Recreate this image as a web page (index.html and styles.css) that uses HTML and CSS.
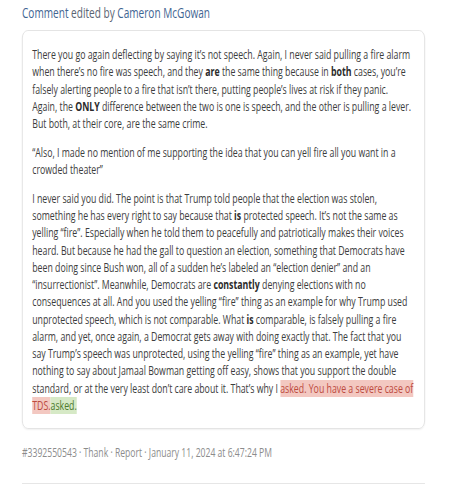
FILE: index.html
```html
<!DOCTYPE html>
<html lang="en">
<head>
<meta charset="utf-8">
<title>Comment</title>
<link rel="stylesheet" href="styles.css">
</head>
<body>
<div class="page">
  <div class="sheet">
    <div class="edit-head"><span class="label">Comment</span> edited by <span class="author">Cameron McGowan</span></div>
    <div class="comment-box">
      <p>There you go again deflecting by saying it’s not speech. Again, I never said pulling a fire alarm when there’s no fire was speech, and they <b>are</b> the same thing because in <b>both</b> cases, you’re falsely alerting people to a fire that isn’t there, putting people’s lives at risk if they panic. Again, the <b>ONLY</b> difference between the two is one is speech, and the other is pulling a lever. But both, at their core, are the same crime.</p>
      <p>“Also, I made no mention of me supporting the idea that you can yell fire all you want in a crowded theater”</p>
      <p>I never said you did. The point is that Trump told people that the election was stolen, something he has every right to say because that <b>is</b> protected speech. It’s not the same as yelling “fire”. Especially when he told them to peacefully and patriotically makes their voices heard. But because he had the gall to question an election, something that Democrats have been doing since Bush won, all of a sudden he’s labeled an “election denier” and an “insurrectionist”. Meanwhile, Democrats are <b>constantly</b> denying elections with no consequences at all. And you used the yelling “fire” thing as an example for why Trump used unprotected speech, which is not comparable. What <b>is</b> comparable, is falsely pulling a fire alarm, and yet, once again, a Democrat gets away with doing exactly that. The fact that you say Trump’s speech was unprotected, using the yelling “fire” thing as an example, yet have nothing to say about Jamaal Bowman getting off easy, shows that you support the double standard, or at the very least don’t care about it. That’s why I <del class="removed">asked. You have a severe case of TDS.</del><ins class="added">asked.</ins></p>
    </div>
    <div class="meta">#3392550543 · Thank · Report · January 11, 2024 at 6:47:24 PM</div>
    <div class="rule"></div>
  </div>
</div>
</body>
</html>
```

FILE: styles.css
```css
html, body {
  margin: 0;
  padding: 0;
  background: #ffffff;
  overflow: hidden;
}

.page {
  padding: 4px 0 0 22px;
  width: 431px;
  overflow: hidden;
}

/* the source screenshot is horizontally compressed; reproduce that */
.sheet {
  width: 552px;
  transform: scaleX(0.73);
  transform-origin: left top;
  font-family: "Open Sans", "Noto Sans", sans-serif;
  color: #3d3d3d;
}

.edit-head {
  font-size: 13.8px;
  line-height: 18px;
  color: #5a6472;
}

.edit-head .label,
.edit-head .author {
  color: #3f6592;
}

.comment-box {
  margin-top: 8px;
  border: 1px solid #e0e0e0;
  border-radius: 8px;
  box-shadow: 0 1px 2px rgba(0, 0, 0, 0.06);
  padding: 15px 13.7px 14px 13px;
  font-size: 12px;
  line-height: 17.25px;
}

.comment-box p {
  margin: 0 0 11.6px;
}

.comment-box p:last-child {
  margin-bottom: 0;
}

.comment-box b {
  font-weight: 700;
  color: #2b2b2b;
}

.removed {
  text-decoration: none;
  background: #f3c8c1;
  color: #bd4a3e;
}

.added {
  text-decoration: none;
  background: #d6e9c6;
  color: #4d7a2c;
}

.meta {
  margin-top: 15px;
  font-size: 11.8px;
  line-height: 17px;
  color: #8c8c8c;
}

.rule {
  margin-top: 22px;
  height: 1px;
  background: #e6e6e6;
}
```
